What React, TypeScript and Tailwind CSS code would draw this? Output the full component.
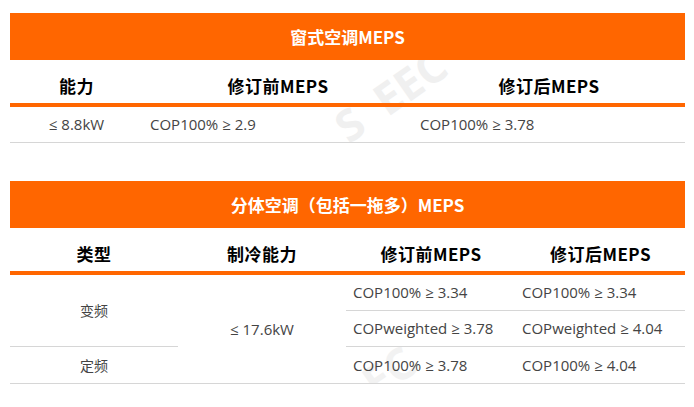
import React from "react";

const head = { fontFamily: '"Noto Sans CJK SC", "Noto Sans", sans-serif' };
const body = { fontFamily: '"Open Sans", "Noto Sans CJK SC", sans-serif' };

export default function App() {
  return (
    <div className="w-[694px] h-[407px] bg-white overflow-hidden" style={head}>
      <div className="pt-[13px] px-[10px] w-[695px]">
        {/* Table 1 */}
        <div className="relative w-[675px] overflow-hidden">
          <div
            className="pointer-events-none absolute left-[318px] top-[60px] -rotate-[35deg] text-[44px] font-bold text-[#f0f0f0] leading-none whitespace-pre select-none"
            style={body}
          >
            S  EEC
          </div>
          <div className="relative h-[47px] bg-[#ff6600] flex items-center justify-center text-white text-[17px] font-bold">
            窗式空调MEPS
          </div>
          <div className="relative grid grid-cols-[133px_270px_272px] h-[35px] pt-[8px] border-b-4 border-[#ff6600] box-content items-center text-[17px] font-bold text-black tracking-[0.5px]">
            <div className="text-center">能力</div>
            <div className="text-center">修订前MEPS</div>
            <div className="text-center">修订后MEPS</div>
          </div>
          <div
            className="relative grid grid-cols-[133px_270px_272px] h-[35px] border-b border-[#d6d6d6] box-content items-center text-[15px] text-[#444]"
            style={body}
          >
            <div className="text-center">≤ 8.8kW</div>
            <div className="pl-[7px]">COP100% ≥ 2.9</div>
            <div className="pl-[7px]">COP100% ≥ 3.78</div>
          </div>
        </div>

        {/* Table 2 */}
        <div className="relative w-[675px] mt-[38px] overflow-hidden">
          <div
            className="pointer-events-none absolute left-[352px] top-[168px] -rotate-[35deg] text-[44px] font-bold text-[#f2f2f2] leading-none whitespace-pre select-none"
            style={body}
          >
            EC
          </div>
          <div className="relative h-[47px] bg-[#ff6600] flex items-center justify-center text-white text-[17px] font-bold">
            分体空调（包括一拖多）MEPS
          </div>
          <div className="relative grid grid-cols-[168px_168px_170px_169px] h-[35px] pt-[8px] border-b-4 border-[#ff6600] box-content items-center text-[17px] font-bold text-black tracking-[0.5px]">
            <div className="text-center">类型</div>
            <div className="text-center">制冷能力</div>
            <div className="text-center">修订前MEPS</div>
            <div className="text-center">修订后MEPS</div>
          </div>
          <div
            className="relative grid grid-cols-[168px_168px_170px_169px] grid-rows-[36px_36px_36px] border-b border-[#d6d6d6] text-[15px] text-[#444]"
            style={body}
          >
            <div className="row-span-2 flex items-center justify-center border-b border-[#d6d6d6] text-[14px]">变频</div>
            <div className="row-span-3 flex items-center justify-center">≤ 17.6kW</div>
            <div className="flex items-center pl-[7px] border-b border-[#d6d6d6]">COP100% ≥ 3.34</div>
            <div className="flex items-center pl-[6px] border-b border-[#d6d6d6]">COP100% ≥ 3.34</div>
            <div className="flex items-center pl-[7px] border-b border-[#d6d6d6]">COPweighted ≥ 3.78</div>
            <div className="flex items-center pl-[6px] border-b border-[#d6d6d6]">COPweighted ≥ 4.04</div>
            <div className="flex items-center justify-center text-[14px]">定频</div>
            <div className="flex items-center pl-[7px]">COP100% ≥ 3.78</div>
            <div className="flex items-center pl-[6px]">COP100% ≥ 4.04</div>
          </div>
        </div>
      </div>
    </div>
  );
}
